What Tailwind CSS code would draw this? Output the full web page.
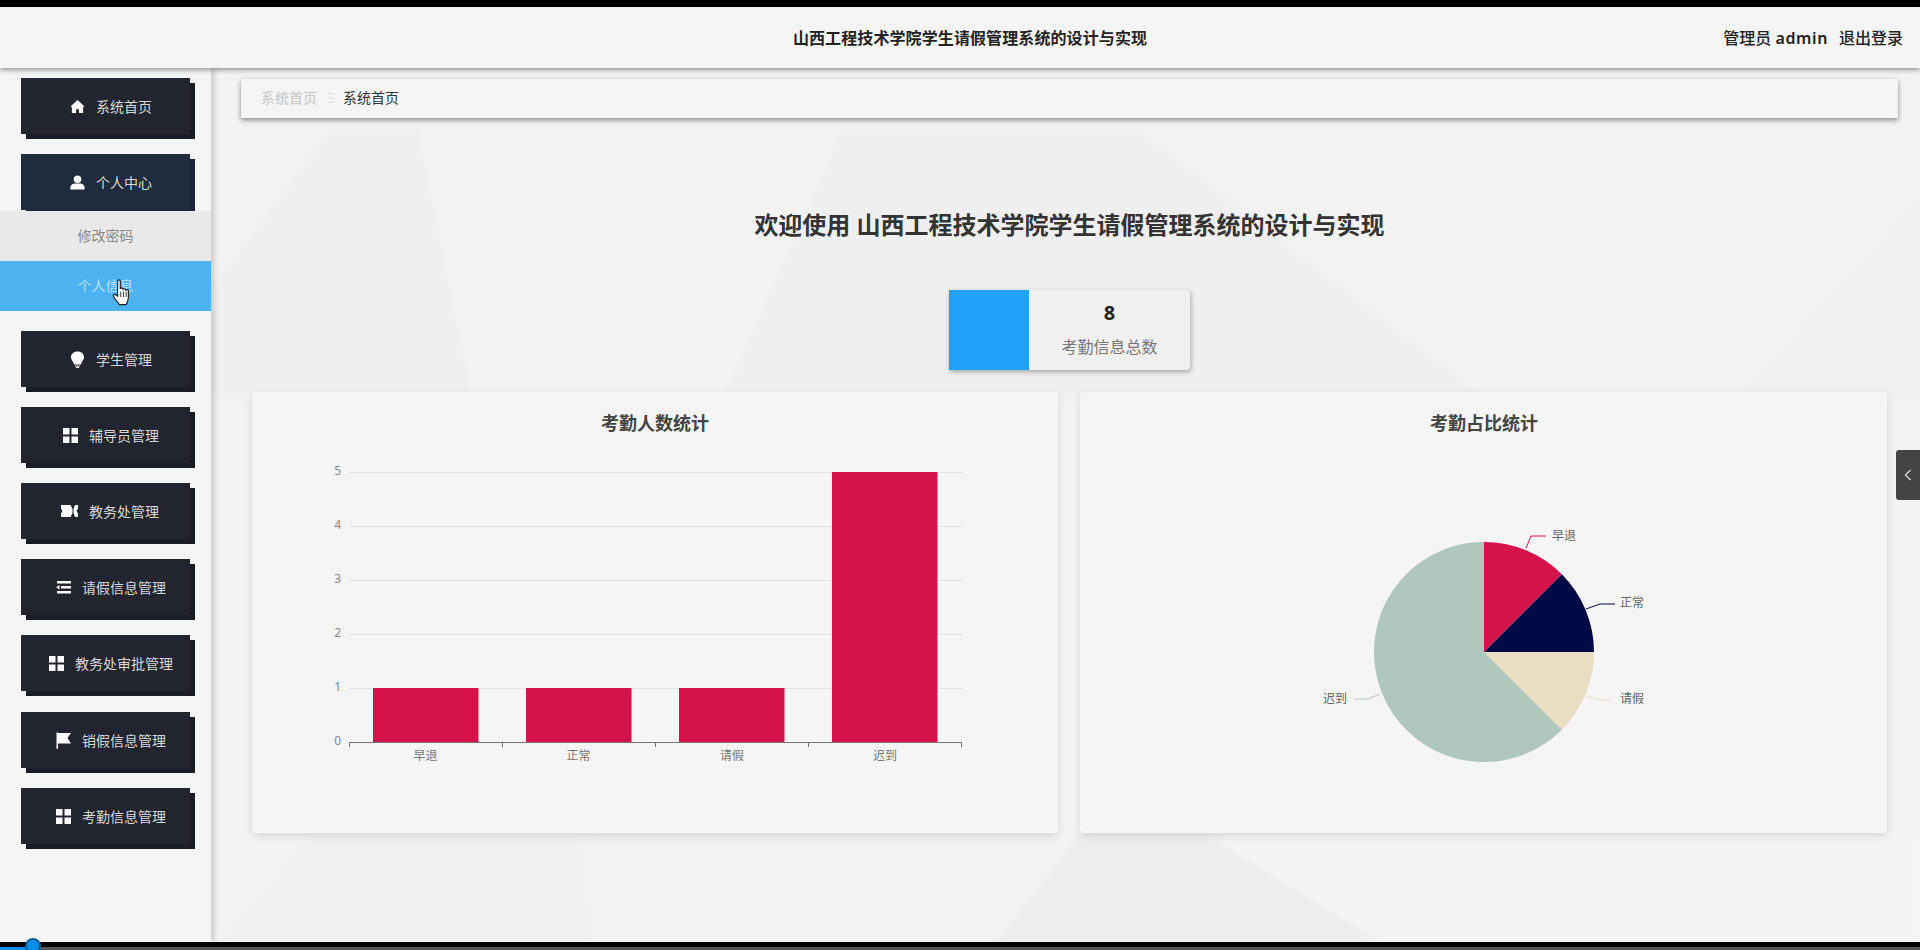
<!DOCTYPE html>
<html lang="zh">
<head>
<meta charset="utf-8">
<title>山西工程技术学院学生请假管理系统的设计与实现</title>
<script src="https://cdn.jsdelivr.net/npm/@tailwindcss/browser@4"></script>
</head>
<body class="w-[1920px] h-[950px] overflow-hidden bg-black font-['Noto_Sans','Noto_Sans_CJK_SC',sans-serif]">
<div class="flex flex-col h-[950px]">
  <div class="h-[7px] bg-black shrink-0"></div>
  <header class="relative z-20 h-[61px] shrink-0 bg-[#f5f5f5] shadow-[0_2px_5px_rgba(0,0,0,0.4)] flex items-center justify-center pl-[20px]">
    <div class="text-[16px] font-semibold tracking-[0.1px] text-[#222]">山西工程技术学院学生请假管理系统的设计与实现</div>
    <div class="absolute right-[17px] top-0 h-full flex items-center gap-[11px] text-[16px] font-medium text-[#222]">
      <span>管理员 <span class="font-semibold tracking-[0.6px]">admin</span></span><span>退出登录</span>
    </div>
  </header>
  <div class="flex flex-1 min-h-0">
    <aside class="relative z-10 w-[211px] shrink-0 bg-[#f5f5f5] shadow-[3px_0_6px_rgba(0,0,0,0.18)] pt-[10px] text-[14px]">
      <div class="flex items-center justify-center gap-[11px] ml-[21px] w-[169px] h-[56px] pl-[11px] mb-[20px] bg-[#22242f] shadow-[5px_5px_0_#1b1c28] text-[#d8d8d8]">
        <svg class="w-[15px] h-[15px] shrink-0" viewBox="0 0 16 16" fill="#fff"><path d="M8 1 0.5 8 2 8.8V15h4.5v-4h3v4H14V8.8L15.5 8Z"/></svg><span>系统首页</span>
      </div>
      <div class="flex items-center justify-center gap-[11px] ml-[21px] w-[169px] h-[56px] pl-[11px] bg-[#1f2c3d] shadow-[5px_5px_0_#1b2438] text-[#d8d8d8]">
        <svg class="w-[15px] h-[15px] shrink-0" viewBox="0 0 16 16" fill="#fff"><circle cx="8" cy="4.5" r="4"/><path d="M0.5 15.5V13c0-2.5 3-4 4.5-4h6c1.500 0 4.500 1.500 4.500 4v2.500Z"/></svg><span>个人中心</span>
      </div>
      <div class="relative z-10 mt-[1px] h-[50px] pb-[2px] flex items-center justify-center bg-[#e9e9e9] text-[#888]">修改密码</div>
      <div class="h-[50px] pb-[2px] flex items-center justify-center bg-[#4cb2f0] text-[#b9e2f9]">个人信息</div>
      <div class="h-[20px]"></div>
      <div class="flex items-center justify-center gap-[11px] ml-[21px] w-[169px] h-[56px] pl-[11px] mb-[20px] bg-[#22242f] shadow-[5px_5px_0_#1b1c28] text-[#d8d8d8]">
        <svg class="w-[15px] h-[17px] shrink-0" viewBox="0 0 15 17" fill="#fff"><path d="M7.500 0.500C3.500 0.500 1 3 1 6.200c0 2.800 2.500 4 3 7.300h7c0.500-3.300 3-4.500 3-7.300C14 3 11.500 0.500 7.500 0.500Z"/><path d="M5 14.500h5v1H5ZM6 16h3v1H6Z"/></svg><span>学生管理</span>
      </div>
      <div class="flex items-center justify-center gap-[11px] ml-[21px] w-[169px] h-[56px] pl-[11px] mb-[20px] bg-[#22242f] shadow-[5px_5px_0_#1b1c28] text-[#d8d8d8]">
        <svg class="w-[15px] h-[15px] shrink-0" viewBox="0 0 15 15" fill="#fff"><path d="M0 0h6.500v6.500H0ZM8.500 0H15v6.500H8.500ZM0 8.500h6.500V15H0ZM8.500 8.500H15V15H8.500Z"/></svg><span>辅导员管理</span>
      </div>
      <div class="flex items-center justify-center gap-[11px] ml-[21px] w-[169px] h-[56px] pl-[11px] mb-[20px] bg-[#22242f] shadow-[5px_5px_0_#1b1c28] text-[#d8d8d8]">
        <svg class="w-[17px] h-[12px] shrink-0 -ml-[2px]" viewBox="0 0 17 12" fill="#fff"><path fill-rule="evenodd" d="M0 0H17V3.500L15.500 6 17 8.500V12H0V8.500L1.500 6 0 3.500ZM9.500 0 11.500 4V8L9.500 12H14L12.500 8V4L14 0Z"/></svg><span>教务处管理</span>
      </div>
      <div class="flex items-center justify-center gap-[11px] ml-[21px] w-[169px] h-[56px] pl-[11px] mb-[20px] bg-[#22242f] shadow-[5px_5px_0_#1b1c28] text-[#d8d8d8]">
        <svg class="w-[15px] h-[13px] shrink-0" viewBox="0 0 15 13" fill="#fff"><path d="M1 0h14v2.500H1ZM5 5h10v2.500H5ZM0 6.200 3.500 4v4.500ZM1 10h14v2.500H1Z"/></svg><span>请假信息管理</span>
      </div>
      <div class="flex items-center justify-center gap-[11px] ml-[21px] w-[169px] h-[56px] pl-[11px] mb-[21px] bg-[#22242f] shadow-[5px_5px_0_#1b1c28] text-[#d8d8d8]">
        <svg class="w-[15px] h-[15px] shrink-0" viewBox="0 0 15 15" fill="#fff"><path d="M0 0h6.500v6.500H0ZM8.500 0H15v6.500H8.500ZM0 8.500h6.500V15H0ZM8.500 8.500H15V15H8.500Z"/></svg><span>教务处审批管理</span>
      </div>
      <div class="flex items-center justify-center gap-[11px] ml-[21px] w-[169px] h-[56px] pl-[11px] mb-[20px] bg-[#22242f] shadow-[5px_5px_0_#1b1c28] text-[#d8d8d8]">
        <svg class="w-[15px] h-[17px] shrink-0" viewBox="0 0 15 17" fill="#fff"><path d="M0.500 0.500h1.500V17H0.500ZM2 1H15L11.500 6 15 11.500H2Z"/></svg><span>销假信息管理</span>
      </div>
      <div class="flex items-center justify-center gap-[11px] ml-[21px] w-[169px] h-[56px] pl-[11px] bg-[#22242f] shadow-[5px_5px_0_#1b1c28] text-[#d8d8d8]">
        <svg class="w-[15px] h-[15px] shrink-0" viewBox="0 0 15 15" fill="#fff"><path d="M0 0h6.500v6.500H0ZM8.500 0H15v6.500H8.500ZM0 8.500h6.500V15H0ZM8.500 8.500H15V15H8.500Z"/></svg><span>考勤信息管理</span>
      </div>
      <svg class="absolute left-[112px] top-[211px] w-[22px] h-[27px]" viewBox="0 0 24 30"><path d="M6 2.500c0-2 3-2 3 0V11c0-1.500 3-1.500 3 0v1c0-1.500 3-1.500 3 0v1c0-1.500 3-1.500 3 0v7c0 4-2 7-2.500 8.500H8c-1-2-5-6-6.500-9-1-2 1.500-3.500 3-1.500L6 19Z" fill="#fff" stroke="#222" stroke-width="1.300"/><path d="M9.500 14v6M12.500 14v6M15.500 14v6" stroke="#222" stroke-width="1"/></svg>
    </aside>
    <main class="relative flex-1 min-w-0 bg-[#f3f3f3] overflow-hidden">
      <svg class="absolute inset-0 w-full h-full blur-[2px]" viewBox="0 0 1709 874" preserveAspectRatio="none">
        <polygon points="120,59 207,59 262,330 0,330 0,220" fill="#efefef"/>
        <polygon points="632,59 926,59 1275,330 512,330" fill="#efefef"/>
        <polygon points="1709,130 1525,330 1709,330" fill="#f0f0f0"/>
        <polygon points="104,765 367,765 382,874 10,874" fill="#f0f0f0"/>
        <polygon points="382,765 850,765 785,874 382,874" fill="#f2f2f2"/>
        <polygon points="870,765 990,765 1170,874 785,874" fill="#ededed"/>
        <polygon points="1000,765 1709,765 1709,874 1170,874" fill="#f4f4f4"/>
      </svg>
      <div class="relative">
        <div class="mt-[11px] ml-[30px] mr-[22px] h-[39px] pb-[2px] bg-[#f5f5f5] shadow-[0_2px_5px_rgba(0,0,0,0.45)] flex items-center pl-[20px] text-[14px]">
          <span class="text-[#ccc] font-medium">系统首页</span>
          <svg class="ml-[11px] mr-[9px] w-[6px] h-[12px]" viewBox="0 0 6 12" fill="none" stroke="#ddd" stroke-width="1"><path d="M0 1.500H6M0 6H6M0 10.500H6"/></svg>
          <span class="text-[#333]">系统首页</span>
        </div>
        <h1 class="mt-[90px] h-[34px] leading-[34px] pl-[8px] text-center text-[24px] font-bold text-[#333]">欢迎使用 山西工程技术学院学生请假管理系统的设计与实现</h1>
        <div class="mt-[48px] ml-[738px] w-[241px] h-[80px] flex bg-[#f0f0f0] rounded-r-[4px] shadow-[1px_2px_5px_rgba(0,0,0,0.3)]">
          <div class="w-[80px] bg-[#1fa2f7]"></div>
          <div class="flex-1 flex flex-col items-center">
            <div class="mt-[8px] h-[30px] leading-[30px] text-[20px] font-bold text-[#222]">8</div>
            <div class="mt-[7px] text-[16px] leading-[24px] text-[#777]">考勤信息总数</div>
          </div>
        </div>
        <div class="mt-[22px] ml-[41px] flex gap-[22px]">
          <section class="w-[806px] h-[441px] bg-[#f5f5f5] rounded-[4px] shadow-[0_3px_10px_rgba(0,0,0,0.12)]">
            <svg class="w-[806px] h-[441px] font-['Noto_Sans','Noto_Sans_CJK_SC',sans-serif]" viewBox="252 392 806 441">
              <text x="655" y="430" text-anchor="middle" font-size="18" font-weight="700" fill="#444">考勤人数统计</text>
              <g stroke="#e2e2e2" stroke-width="1">
                <path d="M349 472.500H963M349 526.500H963M349 580.500H963M349 634.500H963M349 688.500H963"/>
              </g>
              <g fill="#d6124a">
                <rect x="373" y="688" width="105.500" height="55"/>
                <rect x="526" y="688" width="105.500" height="55"/>
                <rect x="679" y="688" width="105.500" height="55"/>
                <rect x="832" y="472" width="105.500" height="271"/>
              </g>
              <path d="M349.500 747V742.500H961.500V747M502.500 742.500V747M655.500 742.500V747M808.500 742.500V747" fill="none" stroke="#777" stroke-width="1"/>
              <g font-size="12" fill="#888" text-anchor="end">
                <text x="341" y="475">5</text><text x="341" y="529">4</text><text x="341" y="583">3</text><text x="341" y="637">2</text><text x="341" y="691">1</text><text x="341" y="745">0</text>
              </g>
              <g font-size="12" fill="#777" text-anchor="middle">
                <text x="425.500" y="760">早退</text><text x="578.500" y="760">正常</text><text x="732" y="760">请假</text><text x="885" y="760">迟到</text>
              </g>
            </svg>
          </section>
          <section class="w-[807px] h-[441px] bg-[#f5f5f5] rounded-[4px] shadow-[0_3px_10px_rgba(0,0,0,0.12)]">
            <svg class="w-[807px] h-[441px] font-['Noto_Sans','Noto_Sans_CJK_SC',sans-serif]" viewBox="1080 392 807 441">
              <text x="1484" y="430" text-anchor="middle" font-size="18" font-weight="700" fill="#444">考勤占比统计</text>
              <path d="M1484 652V542A110 110 0 0 1 1561.800 574.200Z" fill="#d6124a"/>
              <path d="M1484 652L1561.800 574.200A110 110 0 0 1 1594 652Z" fill="#000a47"/>
              <path d="M1484 652H1594A110 110 0 0 1 1561.800 729.800Z" fill="#e9dec2"/>
              <path d="M1484 652L1561.800 729.800A110 110 0 1 1 1484 542Z" fill="#afc7bc"/>
              <path d="M1526 548L1531 536H1546" fill="none" stroke="#d6124a"/>
              <path d="M1586 609L1600 604H1615" fill="none" stroke="#000a47"/>
              <path d="M1586 696L1600 700H1611" fill="none" stroke="#e9dec2"/>
              <path d="M1380 694L1368 699H1354" fill="none" stroke="#afc7bc"/>
              <g font-size="12" fill="#666">
                <text x="1552" y="540">早退</text><text x="1620" y="607">正常</text><text x="1620" y="703">请假</text><text x="1323" y="703">迟到</text>
              </g>
            </svg>
          </section>
        </div>
      </div>
      <div class="absolute right-0 top-[382px] w-[24px] h-[50px] rounded-l-[3px] bg-[#444] flex items-center justify-center">
        <svg class="w-[8px] h-[12px]" viewBox="0 0 8 12" fill="none" stroke="#ddd" stroke-width="1.200"><path d="M6.500 1 1.500 6l5 5"/></svg>
      </div>
    </main>
  </div>
  <div class="relative z-20 h-[8px] shrink-0 bg-black">
    <div class="absolute left-0 right-0 bottom-0 h-[3px] bg-[#555]"></div>
    <div class="absolute left-0 bottom-0 w-[33px] h-[3px] bg-[#0a8fe8]"></div>
    <div class="absolute left-[27px] -top-[2px] w-[12px] h-[12px] rounded-full bg-[#0a8fe8] ring-2 ring-[#0a5f9a]"></div>
  </div>
</div>
</body>
</html>
